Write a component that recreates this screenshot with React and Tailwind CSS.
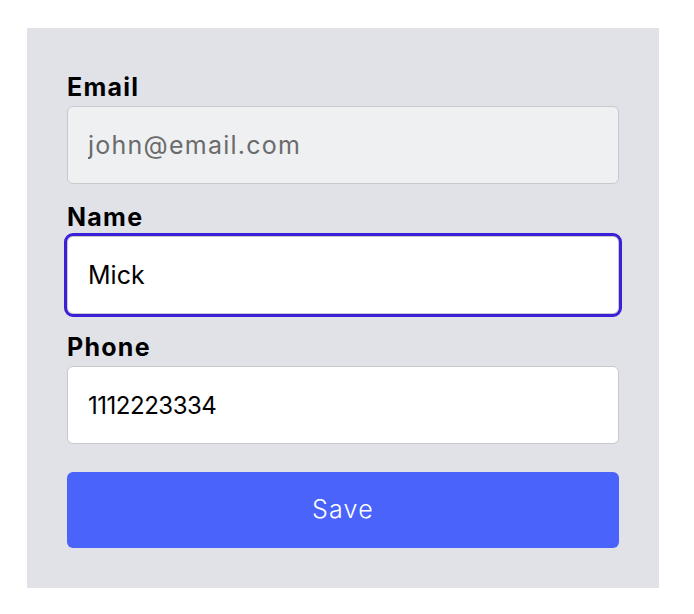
import { useState } from "react";

const font = { fontFamily: "Inter, 'Noto Sans', sans-serif" };

function Field({ label, value, onChange, disabled, focused, numeric }) {
  return (
    <div className="flex flex-col">
      <label className="text-[25px] leading-[38px] font-bold tracking-[0.05em] text-black">{label}</label>
      <input
        value={value}
        onChange={onChange}
        disabled={disabled}
        className={
          "h-[78px] w-full rounded-[6px] border border-[#c9c9cd] px-[20px] outline-none " +
          (numeric ? "text-[24px] tracking-[-0.02em] " : "text-[25px] ") +
          (disabled
            ? "bg-[#eff0f2] tracking-[0.05em] text-[#6b6b6b]"
            : focused
            ? "bg-white text-black outline-[3px] outline-solid outline-[#3a20d6]"
            : "bg-white text-black")
        }
      />
    </div>
  );
}

export default function App() {
  const [name, setName] = useState("Mick");
  const [phone, setPhone] = useState("1112223334");

  return (
    <div className="min-h-screen bg-white pt-[28px] pl-[27px]" style={font}>
      <div className="flex w-[632px] flex-col bg-[#e1e2e7] px-[40px] pt-[40px] pb-[40px]">
        <div className="flex flex-col gap-[14px]">
          <Field label="Email" value="john@email.com" disabled />
          <Field label="Name" value={name} onChange={(e) => setName(e.target.value)} focused />
          <Field label="Phone" value={phone} onChange={(e) => setPhone(e.target.value)} numeric />
        </div>
        <button className="mt-[28px] h-[76px] w-full rounded-[6px] bg-[#4a63fb] text-[25px] font-light tracking-[0.05em] text-white">
          Save
        </button>
      </div>
    </div>
  );
}
